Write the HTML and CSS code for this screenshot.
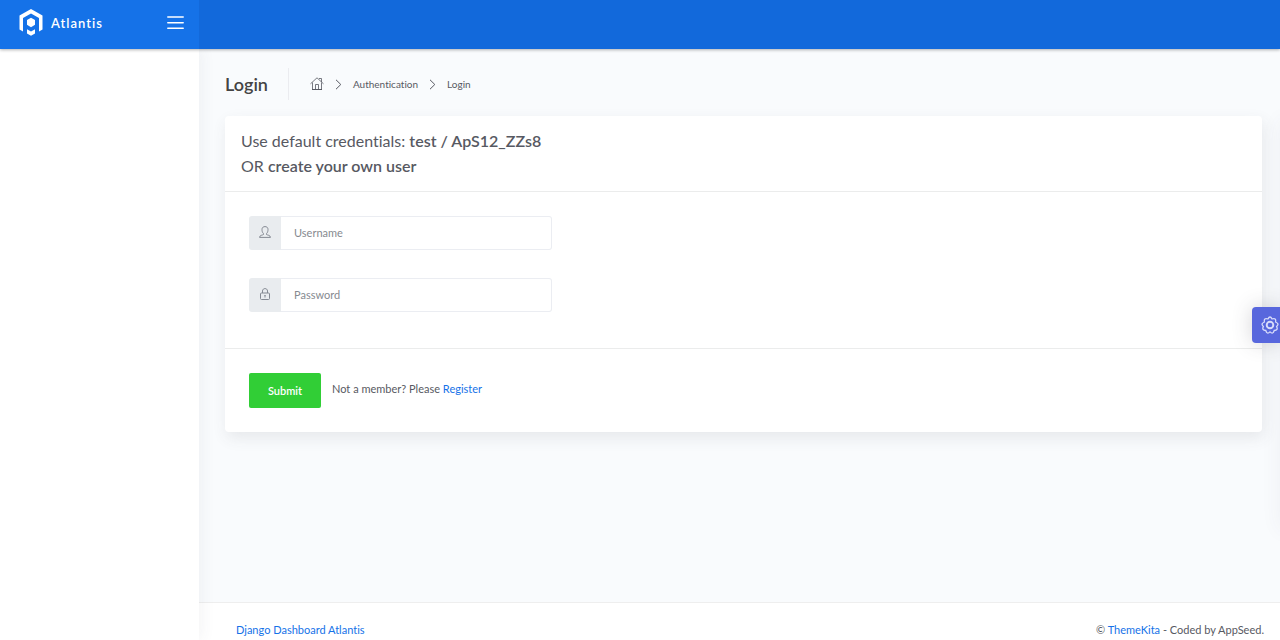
FILE: index.html
```html
<!DOCTYPE html>
<html lang="en">
<head>
<meta charset="utf-8">
<meta name="viewport" content="width=device-width, initial-scale=1">
<title>Login - Atlantis</title>
<link rel="stylesheet" href="styles.css">
</head>
<body>
<div class="app">
  <header class="topbar">
    <div class="brand">
      <a class="brand-link" href="#">
        <svg class="logo" viewBox="0 0 24 27" aria-hidden="true">
          <path fill="#fff" fill-rule="evenodd" d="M12 0 23.500 6.500V20.500L20 22.500V9L12 4.600 4 9V22.500L.5 20.500V6.500ZM12 8.700 16 11V15.800L12 18.200 8 15.800V11ZM8 20.200 12 22.500 16 20.200V24.500L12 26.800 8 24.500Z"/>
        </svg>
        <span class="brand-name">Atlantis</span>
      </a>
      <button class="menu-toggle" type="button" aria-label="Toggle menu">
        <svg class="menu-icon" viewBox="0 0 17 14" fill="none" stroke="#fff" stroke-width="1.500" stroke-linecap="round" aria-hidden="true"><path d="M.8 1H16.200M.8 6.700H16.200M.8 12.300H16.200"/></svg>
      </button>
    </div>
    <nav class="topnav" aria-label="Top"></nav>
  </header>
  <div class="shell">
    <aside class="sidebar" aria-label="Sidebar"></aside>
    <div class="main">
      <main class="content">
        <div class="page-header">
          <h1 class="page-title">Login</h1>
          <nav class="crumbs" aria-label="Breadcrumb">
            <a class="crumb" href="#" aria-label="Home">
              <svg class="home-icon" viewBox="0 0 14 14" fill="none" stroke="currentColor" stroke-width=".8" aria-hidden="true"><path d="M.5 6.800 7 .8 13.500 6.800M9 1.500H11.500V5M2.500 5.500V12.500M11.500 5.500V12.500M5.500 12.500V7.500H8.500V12.500"/><path stroke-width="1" d="M2 12.500H12"/></svg>
            </a>
            <svg class="chevron" viewBox="0 0 7 11" fill="none" stroke="currentColor" aria-hidden="true"><path d="M1 .8 5.800 5.500 1 10.200"/></svg>
            <a class="crumb" href="#">Authentication</a>
            <svg class="chevron" viewBox="0 0 7 11" fill="none" stroke="currentColor" aria-hidden="true"><path d="M1 .8 5.800 5.500 1 10.200"/></svg>
            <a class="crumb" href="#">Login</a>
          </nav>
        </div>
        <form class="card">
          <div class="card-head">
            Use default credentials: <strong>test / ApS12_ZZs8</strong><br>
            OR <strong>create your own user</strong>
          </div>
          <div class="card-body">
            <div class="field">
              <label class="addon" for="username" aria-label="Username">
                <svg class="field-icon" viewBox="0 0 12 12" fill="none" stroke="currentColor" aria-hidden="true"><path d="M4.500 7.600C3.300 6.500 3 5 3 3.500 3 1.600 4.200.6 6 .6S9 1.600 9 3.500C9 5 8.700 6.500 7.500 7.600V8.500C8.300 9.200 11.300 9 11.500 11.400H.5C.7 9 3.700 9.200 4.500 8.500Z"/></svg>
              </label>
              <input class="input" id="username" type="text" placeholder="Username">
            </div>
            <div class="field">
              <label class="addon" for="password" aria-label="Password">
                <svg class="field-icon" viewBox="0 0 12 12" fill="none" stroke="currentColor" aria-hidden="true"><rect x="1.500" y="5" width="9" height="6.500" rx="1"/><path d="M3.500 5V3C3.500-.2 8.500-.2 8.500 3V5M6 7V9.500M5.500 7.500H6.500"/></svg>
              </label>
              <input class="input" id="password" type="password" placeholder="Password">
            </div>
          </div>
          <div class="card-foot">
            <button class="submit" type="submit">Submit</button>
            <p class="hint">Not a member? Please <a class="link" href="#">Register</a></p>
          </div>
        </form>
      </main>
      <footer class="footer">
        <a class="link" href="#">Django Dashboard Atlantis</a>
        <span>© <a class="link" href="#">ThemeKita</a> - Coded by AppSeed.</span>
      </footer>
    </div>
  </div>
</div>
<div class="settings-panel">
  <button class="settings-toggle" type="button" aria-label="Settings">
    <svg class="gear" viewBox="0 0 18 18" fill="none" stroke="currentColor" aria-hidden="true"><path stroke-width="1.300" d="M6.900 3Q9-1 11.100 3Q15.400 1.700 14.600 6Q18.800 7.800 15.600 10.400Q17.500 14.400 13.200 14.500Q12 18.800 9 15.900Q6 18.800 4.800 14.500Q.5 14.400 2.400 10.400Q-.8 7.800 3.400 6Q2.600 1.700 6.900 3Z"/><circle cx="9" cy="9" r="3.300" stroke-width="1.900"/></svg>
  </button>
</div>
</body>
</html>
```
FILE: styles.css
```css
* { box-sizing: border-box; }

body {
  margin: 0;
  background: #f9fbfd;
  color: #575962;
  font: 400 11px/16px Lato, "Liberation Sans", sans-serif;
  font-variant-ligatures: none;
}

a { color: inherit; text-decoration: none; }
.link { color: #1572e8; }

.app { display: flex; flex-direction: column; min-height: 100vh; }

.topbar {
  display: flex;
  position: relative;
  z-index: 2;
  height: 49px;
  box-shadow: 0 1px 3px rgba(0, 0, 0, .3);
}

.brand {
  display: flex;
  align-items: center;
  justify-content: space-between;
  width: 199px;
  padding: 0 15px 4px 19px;
  background: #1572e8;
}

.brand-link { display: flex; align-items: center; gap: 8px; color: #fff; }
.logo { width: 24px; height: 27px; }
.brand-name { font-size: 13px; font-weight: 600; letter-spacing: 1px; }
.menu-toggle { display: flex; padding: 0; border: 0; background: none; }
.menu-icon { width: 17px; height: 14px; }
.topnav { flex: 1; background: #1269db; }

.shell { display: flex; flex: 1; }

.sidebar {
  position: relative;
  z-index: 1;
  width: 199px;
  background: #fff;
  box-shadow: 3px 0 14px rgba(69, 65, 78, .06);
}

.main { display: flex; flex: 1; flex-direction: column; }
.content { flex: 1; padding: 19px 18px 19px 26px; }

.page-header { display: flex; align-items: center; margin-bottom: 16px; }

.page-title {
  margin: 0;
  padding-right: 20px;
  border-right: 1px solid #ebecf0;
  color: #444;
  font-size: 18px;
  font-weight: 600;
  line-height: 32px;
}

.crumbs { display: flex; align-items: center; gap: 11px; padding-left: 21px; font-size: 10px; }
.crumb { display: flex; }
.home-icon { width: 14px; height: 14px; }
.chevron { width: 7px; height: 11px; }

.card {
  border-radius: 4px;
  background: #fff;
  box-shadow: 2px 6px 15px rgba(69, 65, 78, .1);
}

.card-head {
  padding: 12px 16px 13px;
  border-bottom: 1px solid #ebecec;
  font-size: 16px;
  line-height: 25px;
}

.card-head strong { font-weight: 600; }

.card-body {
  display: flex;
  flex-direction: column;
  gap: 28px;
  padding: 24px 24px 36px;
}

.field { display: flex; width: 30%; min-width: 303px; height: 34px; }

.addon {
  display: flex;
  align-items: center;
  justify-content: center;
  width: 32px;
  padding-bottom: 2px;
  border-radius: 3px 0 0 3px;
  background: #e9ecef;
  color: #858a93;
}

.field-icon { width: 12px; height: 12px; }

.input {
  flex: 1;
  min-width: 0;
  padding: 0 13px;
  border: 1px solid #ebedf2;
  border-left: 0;
  border-radius: 0 3px 3px 0;
  background: #fff;
  color: #495057;
  font: inherit;
}

.input::placeholder { color: #868a90; opacity: 1; }

.card-foot {
  display: flex;
  gap: 11px;
  padding: 24px;
  border-top: 1px solid #ebecec;
}

.submit {
  min-width: 72px;
  height: 35px;
  padding: 0 18px;
  border: 0;
  border-radius: 2px;
  background: #31ce36;
  color: #fff;
  font: inherit;
  font-weight: 600;
}

.hint { margin: 8px 0 0; }

.footer {
  display: flex;
  justify-content: space-between;
  padding: 19px 16px 2px 37px;
  border-top: 1px solid #eee;
  background: #fff;
}

.settings-panel {
  position: fixed;
  z-index: 3;
  top: 120px;
  left: 100%;
  width: 200px;
  height: 410px;
  background: #fff;
  box-shadow: 0 0 20px rgba(69, 65, 98, .06);
}

.settings-toggle {
  display: flex;
  position: absolute;
  top: 187px;
  right: 100%;
  align-items: center;
  width: 28px;
  height: 36px;
  padding: 0 0 0 9px;
  border: 0;
  border-radius: 4px 0 0 4px;
  background: #5867dd;
  color: #d8dcfa;
  box-shadow: 0 0 20px rgba(69, 65, 78, .22);
}

.gear { flex: none; width: 18px; height: 18px; }
```
